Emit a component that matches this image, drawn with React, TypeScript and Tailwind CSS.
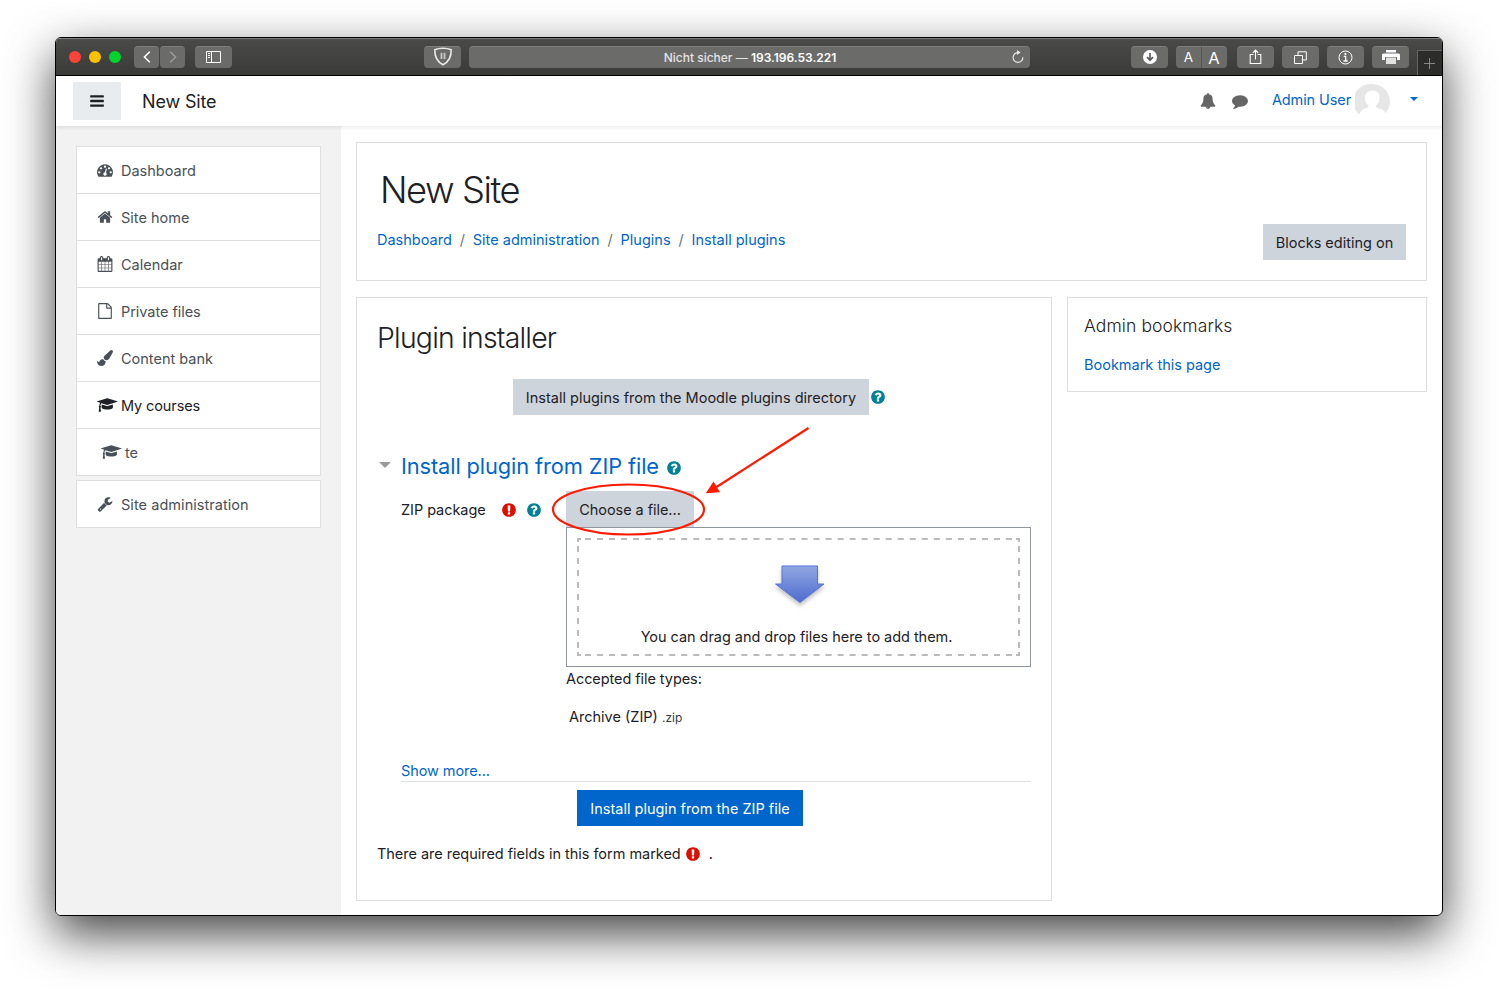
import React from 'react';

const icons = {
  dashboard: 'M384 1152q0-53-37.5-90.5t-90.5-37.5-90.5 37.5-37.5 90.5 37.5 90.5 90.5 37.5 90.5-37.5 37.5-90.5zm192-448q0-53-37.5-90.5t-90.5-37.5-90.5 37.5-37.5 90.5 37.5 90.5 90.5 37.5 90.5-37.5 37.5-90.5zm428 481l101-382q6-26-7.5-48.5t-38.5-29.5-48 6.5-30 39.5l-101 382q-60 5-107 43.5t-63 98.5q-20 77 20 146t117 89 146-20 89-117q16-60-6-117t-72-91zm660-33q0-53-37.5-90.5t-90.5-37.5-90.5 37.5-37.5 90.5 37.5 90.5 90.5 37.5 90.5-37.5 37.5-90.5zm-640-640q0-53-37.5-90.5t-90.5-37.5-90.5 37.5-37.5 90.5 37.5 90.5 90.5 37.5 90.5-37.5 37.5-90.5zm448 192q0-53-37.5-90.5t-90.5-37.5-90.5 37.5-37.5 90.5 37.5 90.5 90.5 37.5 90.5-37.5 37.5-90.5zm320 448q0 261-141 483-19 29-54 29h-1402q-35 0-54-29-141-221-141-483 0-182 71-348t191-286 286-191 348-71 348 71 286 191 191 286 71 348z',
  home: 'M1472 992v480q0 26-19 45t-45 19h-384v-384h-256v384h-384q-26 0-45-19t-19-45v-480q0-1 .5-3t.5-3l575-474 575 474q1 2 1 6zm223-69l-62 74q-8 9-21 11h-3q-13 0-21-7l-692-577-692 577q-12 8-24 7-13-2-21-11l-62-74q-8-10-7-23.5t11-21.5l719-599q32-26 76-26t76 26l244 204v-195q0-14 9-23t23-9h192q14 0 23 9t9 23v408l219 182q10 8 11 21.5t-7 23.5z',
  calendar: 'M192 1664h288v-288h-288v288zm352 0h320v-288h-320v288zm-352-352h288v-320h-288v320zm352 0h320v-320h-320v320zm-352-384h288v-288h-288v288zm736 736h320v-288h-320v288zm-384-736h320v-288h-320v288zm768 736h288v-288h-288v288zm-384-352h320v-320h-320v320zm-352-864v-288q0-13-9.5-22.5t-22.5-9.5h-64q-13 0-22.5 9.5t-9.5 22.5v288q0 13 9.5 22.5t22.5 9.5h64q13 0 22.5-9.5t9.5-22.5zm736 864h288v-320h-288v320zm-384-384h320v-288h-320v288zm384 0h288v-288h-288v288zm32-480v-288q0-13-9.5-22.5t-22.5-9.5h-64q-13 0-22.5 9.5t-9.5 22.5v288q0 13 9.5 22.5t22.5 9.5h64q13 0 22.5-9.5t9.5-22.5zm384-64v1280q0 52-38 90t-90 38h-1408q-52 0-90-38t-38-90v-1280q0-52 38-90t90-38h128v-96q0-66 47-113t113-47h64q66 0 113 47t47 113v96h384v-96q0-66 47-113t113-47h64q66 0 113 47t47 113v96h128q52 0 90 38t38 90z',
  file: 'M1596 380q28 28 48 76t20 88v1152q0 40-28 68t-68 28h-1344q-40 0-68-28t-28-68v-1600q0-40 28-68t68-28h896q40 0 88 20t76 48zm-444-244v376h376q-10-29-22-41l-313-313q-12-12-41-22zm384 1528v-1024h-416q-40 0-68-28t-28-68v-416h-768v1536h1280z',
  brush: 'M1615 0q70 0 122.5 46.5t52.5 116.5q0 63-45 151-332 629-465 752-97 91-218 91-126 0-216.5-92.5t-90.5-219.5q0-128 92-212l638-579q59-54 130-54zm-909 1034q39 76 106.5 130t150.5 76l1 71q4 213-129.5 347t-348.5 134q-123 0-218-46.5t-152.5-127.5-86.5-183-29-220q7 5 41 30t62 44.5 59 36.5 46 17q41 0 55-37 25-66 57.5-112.5t69.5-76 88-47.5 103-25.5 125-10.5z',
  cap: 'M1774 836l18 316q4 69-82 128t-235 93.5-323 34.5-323-34.5-235-93.5-82-128l18-316 574 181q22 7 48 7t48-7zm530-324q0 23-22 31l-1120 352q-4 1-10 1t-10-1l-652-206q-43 34-71 111.5t-34 178.5q63 36 63 109 0 69-58 107l58 433q2 14-8 25-9 11-24 11h-192q-15 0-24-11-10-11-8-25l58-433q-58-38-58-107 0-73 65-111 11-207 98-330l-333-104q-22-8-22-31t22-31l1120-352q4-1 10-1t10 1l1120 352q22 8 22 31z',
  wrench: 'M448 1472q0-26-19-45t-45-19-45 19-19 45 19 45 45 19 45-19 19-45zm644-420l-682 682q-37 37-90 37-52 0-91-37l-106-108q-38-36-38-90 0-53 38-91l681-681q39 98 114.5 173.5t173.5 114.5zm634-435q0 39-23 106-47 134-164.5 217.5t-258.5 83.5q-185 0-316.5-131.5t-131.5-316.5 131.5-316.5 316.5-131.5q58 0 121.5 16.5t107.5 46.5q16 11 16 28t-16 28l-293 169v224l193 107q5-3 79-48.5t135.5-81 70.5-35.5q15 0 23.5 10t8.5 25z',
  help: 'M1024 1376v-192q0-14-9-23t-23-9h-192q-14 0-23 9t-9 23v192q0 14 9 23t23 9h192q14 0 23-9t9-23zm256-672q0-88-55.5-163t-138.5-116-170-41q-243 0-371 213-15 24 8 42l132 100q7 6 19 6 16 0 25-12 53-68 86-92 34-24 86-24 48 0 85.5 26t37.5 59q0 38-20 61t-68 45q-63 28-115.5 86.5t-52.5 125.5v36q0 14 9 23t23 9h192q14 0 23-9t9-23q0-19 21.5-49.5t54.5-49.5q32-18 49-28.5t46-35 44.5-48 28-60.5 12.5-81zm384 192q0 209-103 385.5t-279.5 279.5-385.5 103-385.5-103-279.5-279.5-103-385.5 103-385.5 279.5-279.5 385.5-103 385.5 103 279.5 279.5 103 385.5z',
  required: 'M896 128q209 0 385.5 103t279.5 279.5 103 385.5-103 385.5-279.5 279.5-385.5 103-385.5-103-279.5-279.5-103-385.5 103-385.5 279.5-279.5 385.5-103zm128 1247v-190q0-14-9-23.5t-22-9.5h-192q-13 0-23 10t-10 23v190q0 13 10 23t23 10h192q13 0 22-9.5t9-23.5zm-2-344l18-621q0-12-10-18-10-8-24-8h-220q-14 0-24 8-10 6-10 18l17 621q0 10 10 17.5t24 7.5h185q14 0 23.5-7.5t10.5-17.5z',
  comment: 'M1792 896q0 174-120 321.5t-326 233-450 85.5q-70 0-145-8-198 175-460 242-49 14-114 22-17 2-30.5-9t-17.5-29v-1q-3-4-.5-12t2-10 4.5-9.5l6-9 7-8.5 8-9q7-8 31-34.5t34.5-38 31-39.5 32.5-51 27-59 26-76q-157-89-247.5-220t-90.5-281q0-130 71-248.5t191-204.5 286-136.5 348-50.5q244 0 450 85.5t326 233 120 321.5z',
  bell: 'M912 1696q0-16-16-16-59 0-101.5-42.5t-42.5-101.5q0-16-16-16t-16 16q0 73 51.5 124.5t124.5 51.5q16 0 16-16zm816-288q0 52-38 90t-90 38h-448q0 106-75 181t-181 75-181-75-75-181h-448q-52 0-90-38t-38-90q50-42 91-88t85-119.5 74.5-158.5 50-206 19.5-260q0-152 117-282.5t307-158.5q-8-19-8-39 0-40 28-68t68-28 68 28 28 68q0 20-8 39 190 28 307 158.5t117 282.5q0 139 19.5 260t50 206 74.5 158.5 85 119.5 91 88z',
  bars: 'M1664 1344v128q0 26-19 45t-45 19h-1408q-26 0-45-19t-19-45v-128q0-26 19-45t45-19h1408q26 0 45 19t19 45zm0-512v128q0 26-19 45t-45 19h-1408q-26 0-45-19t-19-45v-128q0-26 19-45t45-19h1408q26 0 45 19t19 45zm0-512v128q0 26-19 45t-45 19h-1408q-26 0-45-19t-19-45v-128q0-26 19-45t45-19h1408q26 0 45 19t19 45z',
};

type IconName = keyof typeof icons;

function Icon({ name, className = '' }: { name: IconName; className?: string }) {
  const wide = name === 'cap';
  return (
    <svg
      viewBox={wide ? '0 0 2304 1792' : '0 0 1792 1792'}
      width={wide ? 20.57 : 16}
      height={16}
      fill="currentColor"
      className={`shrink-0 ${className}`}
    >
      <path d={icons[name]} />
    </svg>
  );
}

function ToolButton({ className = '', children }: { className?: string; children?: React.ReactNode }) {
  return (
    <div
      className={`flex h-[22px] shrink-0 items-center justify-center rounded-[4px] border-t border-[#7d7d7b] bg-[#6b6b69] text-white ${className}`}
    >
      {children}
    </div>
  );
}

function TitleBar() {
  return (
    <div className="flex h-[38px] shrink-0 items-center border-t border-b border-t-[#7b7b79] border-b-black bg-linear-to-b from-[#4a4a48] to-[#3a3a38]">
      <div className="ml-[13px] flex gap-2">
        <span className="size-3 rounded-full bg-[#ff4238]" />
        <span className="size-3 rounded-full bg-[#ffc000]" />
        <span className="size-3 rounded-full bg-[#00d42c]" />
      </div>
      <ToolButton className="ml-[13px] w-[25px] pb-px">
        <svg width="8" height="12" viewBox="0 0 8 12" fill="none" stroke="currentColor" strokeWidth="1.6">
          <path d="M6.8.7 1.4 6l5.4 5.3" />
        </svg>
      </ToolButton>
      <ToolButton className="ml-px w-[25px] pb-px">
        <svg width="8" height="12" viewBox="0 0 8 12" fill="none" stroke="#9c9c9a" strokeWidth="1.4">
          <path d="M1.2.7 6.600 6 1.200 11.300" />
        </svg>
      </ToolButton>
      <ToolButton className="ml-[10px] w-[37px] pb-px">
        <svg width="15" height="12" viewBox="0 0 15 12" fill="none" stroke="currentColor">
          <path d="M.5.500h14v11H.500zM5.500.500v11M2 2.500h2M2 4.500h2M2 6.500h2" />
        </svg>
      </ToolButton>
      <ToolButton className="ml-[192px] w-[37px] pb-[3px]">
        <svg width="20" height="19" viewBox="0 0 20 20" fill="none" stroke="#e9e9e7" strokeWidth="1.700">
          <path d="M10 1.300c3 0 6.200.500 8.600 1.600C18.900 9.500 16.500 15.300 10 18.700 3.500 15.300 1.100 9.500 1.400 2.900 3.800 1.800 7 1.300 10 1.300Z" />
          <path d="M8.400 6v6.500M11.600 6v6.500" stroke="#c9c9c7" strokeWidth="1.900" />
        </svg>
      </ToolButton>
      <ToolButton className="ml-2 w-[561px]">
        <div className="ml-[20px] flex-1 text-center text-[12px] leading-5 font-medium text-[#e4e4e2]">
          Nicht sicher — <span className="font-semibold text-white">193.196.53.221</span>
        </div>
        <svg className="mr-[5px] mb-px" width="14" height="14" viewBox="0 0 14 14" fill="none" stroke="#e6e6e4" strokeWidth="1.200">
          <path d="M7.500 2.600A4.900 4.900 0 1 0 11.900 7.300" />
          <path d="M6 0v5l3.600-2.500z" fill="#e6e6e4" stroke="none" />
        </svg>
      </ToolButton>
      <ToolButton className="ml-[101px] w-[37px]">
        <svg className="mb-px" width="14" height="14" viewBox="0 0 14 14">
          <circle cx="7" cy="7" r="7" fill="white" />
          <path d="M7 3v7M4 7.200l3 3 3-3" fill="none" stroke="#5c5c5a" strokeWidth="1.700" />
        </svg>
      </ToolButton>
      <ToolButton className="ml-2 w-[51px]">
        <span className="flex h-[21px] w-[26px] items-center justify-center border-r border-[#555553] text-[13.500px]">A</span>
        <span className="flex-1 pr-px text-center text-[16.500px] leading-5">A</span>
      </ToolButton>
      <ToolButton className="ml-[10px] w-[37px] pb-px">
        <svg width="13" height="16" viewBox="0 0 13 16" fill="none" stroke="currentColor" strokeWidth="1.100">
          <path d="M4.500 5.500H1.200v9h10.600v-9H8.500M6.500 10.500V1.200M3.800 3.800l2.700-2.700 2.700 2.700" />
        </svg>
      </ToolButton>
      <ToolButton className="ml-2 w-[37px] pb-px">
        <svg width="13" height="13" viewBox="0 0 13 13" fill="none" stroke="currentColor">
          <path d="M.5 4.500h8v8h-8zM4 4.500V.800h8.300v8.200H8.500" />
        </svg>
      </ToolButton>
      <ToolButton className="ml-2 w-[37px] pb-px">
        <svg width="15" height="15" viewBox="0 0 15 15" fill="none" stroke="currentColor">
          <circle cx="7.500" cy="7.500" r="6.500" />
          <path d="M5.700 6.300H7.700v4.500M5.500 11h4.200" strokeWidth="1.300" />
          <circle cx="7.400" cy="3.900" r="1.100" fill="currentColor" stroke="none" />
        </svg>
      </ToolButton>
      <ToolButton className="ml-2 w-[37px]">
        <svg className="mb-px ml-px" width="18" height="14" viewBox="0 0 18 14" fill="currentColor">
          <path d="M4 0h10v2.500H4zM1.500 3.500h15q1.500 0 1.500 1.500v5h-3V7H3v3H0V5q0-1.500 1.500-1.500z" />
          <path d="M4 7.500h10V14H4z" fill="#e2e2e0" />
        </svg>
      </ToolButton>
      <div className="ml-2 flex h-[25px] flex-1 items-center justify-center self-end border-t border-l border-[#666664] bg-[#2c2c2a] pr-px">
        <svg width="11" height="11" viewBox="0 0 11 11" stroke="#8b8b89" strokeWidth="1">
          <path d="M5.500 0v11M0 5.500h11" />
        </svg>
      </div>
    </div>
  );
}

function NavBar() {
  return (
    <header className="z-10 flex h-[50px] shrink-0 items-center bg-white shadow-[0_2px_4px_rgba(0,0,0,0.08)]">
      <div className="ml-[17px] flex h-[38px] w-12 items-center justify-center bg-[#e9ecef] text-[#1d2125]">
        <Icon name="bars" />
      </div>
      <div className="mt-[2px] ml-[21px] text-[18px] leading-6 tracking-[-0.16px]">New Site</div>
      <Icon name="bell" className="ml-auto text-[#666666]" />
      <Icon name="comment" className="ml-4 text-[#666666]" />
      <div className="-mt-[3px] ml-[24px] text-[14.5px] leading-5 tracking-[-0.1px] text-[#0066cc]">Admin User</div>
      <svg className="ml-1 shrink-0" width="35" height="35" viewBox="0 0 35 35">
        <path d="M17.500 0a17.500 17.500 0 0 1 13 29.200Q28.500 24.800 23 24.200C20.800 23.500 21 22.500 21 21.600Q24.500 19 24.500 13.500C24.500 9 21.500 6.500 17.500 6.500S10 9 10 13.500Q10 19 13.500 21.600C13.500 22.500 13.600 23.500 11.500 24.200 7 25 5.500 27 4.200 30.500A17.500 17.500 0 0 1 17.500 0Z" fill="#e6e6e6" />
      </svg>
      <svg className="-mt-[4px] mr-[24px] ml-[20px]" width="8" height="4" viewBox="0 0 8 4" fill="#0066cc">
        <path d="M0 0h8L4 4z" />
      </svg>
    </header>
  );
}

function SideItem({ icon, label, className = '' }: { icon: IconName; label: string; className?: string }) {
  return (
    <a className={`flex h-[47px] items-center border-b border-[#dfdfdf] pl-5 ${className}`}>
      <span className="flex w-6">
        <Icon name={icon} />
      </span>
      <span className="pt-[2px]">{label}</span>
    </a>
  );
}

function SideBar() {
  return (
    <aside className="w-[285px] shrink-0 bg-[#f2f2f2] pt-5 pr-5 pl-5 text-[14.5px] text-[#495057]">
      <nav className="border border-b-0 border-[#dfdfdf] bg-white">
        <SideItem icon="dashboard" label="Dashboard" />
        <SideItem icon="home" label="Site home" />
        <SideItem icon="calendar" label="Calendar" />
        <SideItem icon="file" label="Private files" className="tracking-[-0.05px]" />
        <SideItem icon="brush" label="Content bank" />
        <SideItem icon="cap" label="My courses" className="tracking-[-0.1px] text-[#1d2125]" />
        <SideItem icon="cap" label="te" className="pl-6" />
      </nav>
      <nav className="mt-1 border border-b-0 border-[#dfdfdf] bg-white">
        <SideItem icon="wrench" label="Site administration" className="tracking-[0.05px]" />
      </nav>
    </aside>
  );
}

function PageHeader() {
  const crumbs = ['Dashboard', 'Site administration', 'Plugins', 'Install plugins'];
  return (
    <section className="h-[139px] border border-[#dfdfdf] px-5 pt-[25px]">
      <h1 className="ml-[3px] text-[36.3px] leading-[45px] font-light tracking-[-1.45px]">New Site</h1>
      <div className="mt-[11px] flex justify-between">
        <nav className="mt-[5px] flex leading-[22px] text-[#0066cc]">
          {crumbs.map((crumb, i) => (
            <React.Fragment key={crumb}>
              {i > 0 && <span className="w-[21px] text-center text-[#6c757d]">/</span>}
              <a>{crumb}</a>
            </React.Fragment>
          ))}
        </nav>
        <button className="h-9 w-[143px] bg-[#ced4dc] pt-px">Blocks editing on</button>
      </div>
    </section>
  );
}

function DashedFrame() {
  return (
    <svg className="absolute top-[10px] left-[10px]" width="443" height="118" viewBox="0 0 443 118" fill="none" stroke="#bbbbbb" strokeWidth="2">
      <path d="M8 1h427M8 117h427" strokeDasharray="6 6.029" />
      <path d="M1 8v102M442 8v102" strokeDasharray="6 6" />
      <path d="M4 1H1v3M439 1h3v3M4 117H1v-3M439 117h3v-3" />
    </svg>
  );
}

function DropZone() {
  return (
    <div className="relative flex h-[140px] flex-col items-center border border-[#8f959e] pt-[36px]">
      <DashedFrame />
      <svg className="shrink-0 overflow-visible drop-shadow-[0_3px_2px_rgba(0,0,0,0.25)]" width="52" height="40" viewBox="0 0 52 40">
        <defs>
          <linearGradient id="drop" x1="0" y1="0" x2="0" y2="1">
            <stop offset="0" stopColor="#92a7e2" />
            <stop offset="1" stopColor="#4c6bce" />
          </linearGradient>
        </defs>
        <path d="M9 2h35.500v18h6.500L27 38.500 2.500 20H9z" fill="url(#drop)" stroke="#5575d3" strokeWidth="1" />
      </svg>
      <p className="mt-[23px] -ml-[4px] leading-5 tracking-[-0.04px]">You can drag and drop files here to add them.</p>
    </div>
  );
}

function Highlight() {
  return (
    <svg className="pointer-events-none absolute top-[123px] left-[189px]" width="270" height="120" viewBox="546 421 270 120" fill="none">
      <ellipse cx="628.500" cy="509.500" rx="75.500" ry="25" stroke="#ff1a00" strokeWidth="2.200" />
      <path d="M808.500 428 715 488" stroke="#ff1a00" strokeWidth="2.200" />
      <path d="M705.800 493.300 713.500 481.500 720 492.300Z" fill="#ff1a00" />
    </svg>
  );
}

function Installer() {
  return (
    <section className="relative w-[696px] border border-[#dfdfdf] px-5 pt-[23px]">
      <h2 className="text-[28.4px] leading-[34px] font-light tracking-[-0.78px]">Plugin installer</h2>
      <div className="mt-6 ml-[136px] flex h-9 items-center">
        <button className="h-9 w-[356px] bg-[#ced4dc] pt-px">Install plugins from the Moodle plugins directory</button>
        <Icon name="help" className="ml-[0.5px] text-[#008196]" />
      </div>
      <div className="mt-[34px] flex h-8 items-center">
        <svg className="ml-[2px]" width="12" height="6" viewBox="0 0 12 6" fill="#999999">
          <path d="M0 0h12L6 6z" />
        </svg>
        <h3 className="mt-[2px] ml-[10px] text-[21.8px] leading-8 tracking-[-0.1px] text-[#0066cc]">Install plugin from ZIP file</h3>
        <Icon name="help" className="mt-[5px] ml-[7px] text-[#008196]" />
      </div>
      <div className="mt-[10px] ml-6 flex">
        <div className="flex h-9 w-[165px] items-center pt-px">
          <span className="w-[100px] tracking-[-0.05px]">ZIP package</span>
          <Icon name="required" className="mt-px text-[#dc1000]" />
          <Icon name="help" className="mt-px ml-[9px] text-[#008196]" />
        </div>
        <div className="flex-1">
          <button className="block h-9 w-[128px] bg-[#ced4dc] pt-px tracking-[-0.05px]">Choose a file...</button>
          <DropZone />
          <p className="mt-[2px] leading-5 tracking-[-0.07px]">Accepted file types:</p>
          <p className="mt-[18px] ml-[3px] leading-5">
            Archive (ZIP) <span className="text-[12px] text-[#343a40]">.zip</span>
          </p>
        </div>
      </div>
      <div className="mt-[33px] ml-6 h-[21px] border-b border-[#dfdfdf] leading-5 tracking-[-0.08px] text-[#0066cc]">Show more...</div>
      <button className="mt-2 ml-[200px] block h-9 w-[226px] bg-[#0066cc] pt-px text-white">Install plugin from the ZIP file</button>
      <p className="mt-[17px] flex items-center leading-[22px] tracking-[-0.03px]">
        There are required fields in this form marked
        <Icon name="required" className="ml-[4px] text-[#dc1000]" />
        <span className="ml-2">.</span>
      </p>
      <Highlight />
    </section>
  );
}

export default function App() {
  return (
    <div className="h-[989px] w-[1498px] overflow-hidden bg-white pt-[37px] pl-[55px] font-['Inter',sans-serif] text-[14.5px] text-[#1d2125]">
      <div className="flex h-[879px] w-[1388px] flex-col rounded-[6px] shadow-[0_18px_48px_rgba(0,0,0,0.74)]">
        <div className="flex flex-1 flex-col overflow-hidden rounded-[6px] border border-black bg-white">
          <TitleBar />
          <NavBar />
          <div className="flex flex-1">
            <SideBar />
            <main className="flex-1 px-[15px] pt-4">
              <PageHeader />
              <div className="mt-4 flex h-[604px] items-start gap-[15px]">
                <div className="flex self-stretch">
                  <Installer />
                </div>
                <aside className="h-[95px] flex-1 border border-[#dfdfdf] px-4 pt-4">
                  <h5 className="text-[17.5px] leading-6 font-light tracking-[0.1px]">Admin bookmarks</h5>
                  <a className="mt-[17px] block leading-5 text-[#0066cc]">Bookmark this page</a>
                </aside>
              </div>
            </main>
          </div>
        </div>
      </div>
    </div>
  );
}
